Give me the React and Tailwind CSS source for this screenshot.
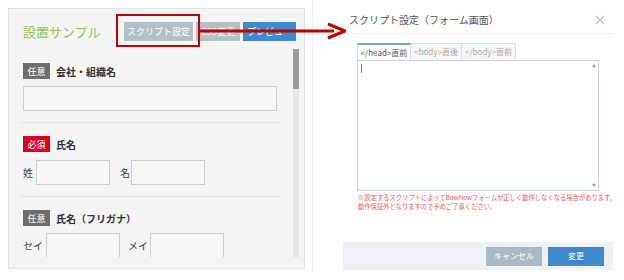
import React from 'react';

const font = { fontFamily: '"Noto Sans CJK JP", "Noto Sans", sans-serif' };

const Badge = ({ required, children }) => (
  <span
    className={`inline-flex h-[16px] w-[27px] items-center justify-center text-[9px] leading-none text-white ${
      required ? 'bg-[#d8002b]' : 'bg-[#6e6e6e]'
    }`}
  >
    {children}
  </span>
);

const FieldLabel = ({ required, children }) => (
  <div className="flex items-center gap-[6px]">
    <Badge required={required}>{required ? '必須' : '任意'}</Badge>
    <span className="text-[10px] font-bold text-[#333]">{children}</span>
  </div>
);

const Box = ({ className = '' }) => (
  <div className={`h-[25px] border border-[#cfcfcf] bg-[#f7f7f7] ${className}`} />
);

const LeftPanel = () => (
  <div className="mt-[8px] flex h-[261px] w-[297px] flex-col border border-[#e2e2e2] bg-[#f4f4f4]">
    <div className="flex items-center pl-[14px] pt-[13px]">
      <h2 className="w-[101px] text-[13px] leading-none text-[#8fc267]">設置サンプル</h2>
      <div className="flex gap-[3px]">
        <button className="h-[19px] w-[69px] bg-[#b4c0c8] text-[9px] text-white">スクリプト設定</button>
        <button className="h-[19px] w-[44px] bg-[#b4c0c8] text-[9px] text-white">CSS変更</button>
        <button className="h-[19px] w-[53px] bg-[#3e8ad0] text-[9px] text-white">プレビュー</button>
      </div>
    </div>
    <div className="mt-[8px] flex h-[208px] overflow-hidden">
      <div className="w-[283px] shrink-0 pl-[14px] pt-[14px]">
        <FieldLabel>会社・組織名</FieldLabel>
        <Box className="mt-[7px] w-[254px]" />
        <div className="mt-[11px] ml-[-3px] w-[260px] border-t border-[#e6e6e6]" />
        <div className="mt-[13px]">
          <FieldLabel required>氏名</FieldLabel>
        </div>
        <div className="mt-[8px] flex items-center text-[10px] text-[#444]">
          <span className="w-[13px]">姓</span>
          <Box className="w-[74px]" />
          <span className="ml-[10px] w-[11px]">名</span>
          <Box className="w-[74px]" />
        </div>
        <div className="mt-[11px] ml-[-3px] w-[260px] border-t border-[#e6e6e6]" />
        <div className="mt-[13px]">
          <FieldLabel>氏名（フリガナ）</FieldLabel>
        </div>
        <div className="mt-[7px] flex items-start text-[10px] text-[#444]">
          <span className="mt-[5px] w-[23px]">セイ</span>
          <Box className="w-[74px] border-b-0" />
          <span className="mt-[5px] ml-[8px] w-[22px]">メイ</span>
          <Box className="w-[74px] border-b-0" />
        </div>
      </div>
      <div className="ml-[1px] flex w-[6px] flex-col bg-[#e6e6e6]">
        <div className="h-[40px] bg-[#9b9b9b]" />
      </div>
    </div>
  </div>
);

const Modal = () => (
  <div className="ml-[7px] flex h-[270px] flex-1 border-l border-[#eeeeee]">
    <div className="ml-[30px] flex w-[270px] flex-col bg-white">
      <div className="flex h-[34px] items-center justify-between border-b border-[#eeeeee] pl-[6px] pr-[8px] pt-[6px]">
        <span className="text-[10px] text-[#555]">スクリプト設定（フォーム画面）</span>
        <svg width="10" height="10" viewBox="0 0 10 10">
          <path d="M1 1L9 9M9 1L1 9" stroke="#bdbdbd" strokeWidth="1.2" />
        </svg>
      </div>
      <div className="ml-[14px] mt-[9px] flex h-[17px] text-[8px] leading-none">
        <div className="flex w-[54px] items-center justify-center border-t-2 border-x border-t-[#6fa6d8] border-x-[#d5dde5] bg-white text-[#555]">
          &lt;/head&gt;直前
        </div>
        <div className="flex w-[51px] items-center justify-center border-t border-r border-[#d5dde5] bg-[#f6f6f6] text-[#aaa]">
          &lt;body&gt;直後
        </div>
        <div className="flex w-[54px] items-center justify-center border-t border-r border-[#d5dde5] bg-[#f6f6f6] text-[#aaa]">
          &lt;/body&gt;直前
        </div>
      </div>
      <div className="ml-[14px] flex h-[131px] w-[242px] border border-[#c9d4de] bg-white">
        <div className="flex-1 pl-[3px] pt-[3px]">
          <div className="h-[9px] w-px bg-[#888]" />
        </div>
        <div className="flex w-[8px] flex-col items-center justify-between py-[3px] text-[4px] leading-none text-[#999]">
          <span>▲</span>
          <span>▼</span>
        </div>
      </div>
      <p className="ml-[15px] mt-[2px] whitespace-nowrap text-[6.3px] leading-[9px] text-[#ff5a5a]">
        ※設定するスクリプトによってBowNowフォームが正しく動作しなくなる場合があります。
        <br />
        動作保証外となりますので予めご了承ください。
      </p>
      <div className="mt-auto flex h-[28px] items-center justify-end gap-[6px] bg-[#eef1f6] pr-[9px]">
        <button className="h-[19px] w-[56px] bg-[#aab8c2] text-[8px] text-white">キャンセル</button>
        <button className="h-[19px] w-[56px] bg-[#3f88cc] text-[8px] text-white">変更</button>
      </div>
    </div>
  </div>
);

export default function App() {
  return (
    <div className="relative flex h-[280px] w-[624px] bg-white pl-[8px]" style={font}>
      <LeftPanel />
      <Modal />
      <div className="absolute left-[116px] top-[14px] h-[33px] w-[84px] border-2 border-[#c00000]" />
      <svg className="absolute left-[200px] top-[22px]" width="146" height="18" viewBox="0 0 146 18">
        <path d="M0 9H134" stroke="#c00000" strokeWidth="3" />
        <path d="M128 2L145 9L128 16" fill="none" stroke="#c00000" strokeWidth="3" />
      </svg>
    </div>
  );
}
